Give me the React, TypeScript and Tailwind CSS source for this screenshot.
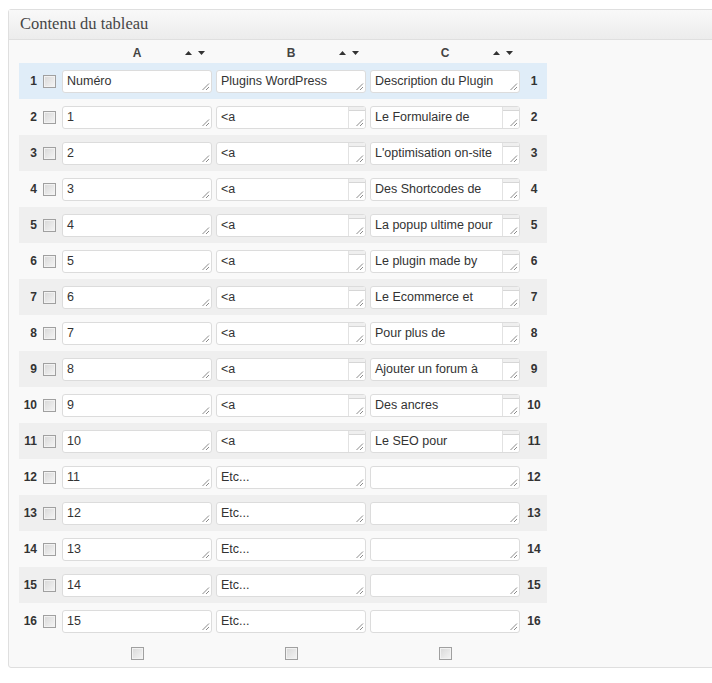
import React from 'react';

type Row = [string, string, string];

const rows: Row[] = [
  ['Numéro', 'Plugins WordPress', 'Description du Plugin'],
  ['1', '<a', 'Le Formulaire de'],
  ['2', '<a', "L'optimisation on-site"],
  ['3', '<a', 'Des Shortcodes de'],
  ['4', '<a', 'La popup ultime pour'],
  ['5', '<a', 'Le plugin made by'],
  ['6', '<a', 'Le Ecommerce et'],
  ['7', '<a', 'Pour plus de'],
  ['8', '<a', 'Ajouter un forum à'],
  ['9', '<a', 'Des ancres'],
  ['10', '<a', 'Le SEO pour'],
  ['11', 'Etc...', ''],
  ['12', 'Etc...', ''],
  ['13', 'Etc...', ''],
  ['14', 'Etc...', ''],
  ['15', 'Etc...', ''],
];

function Grip() {
  return (
    <svg className="absolute bottom-[1px] right-[1px]" width="9" height="9" viewBox="0 0 9 9">
      <line x1="8" y1="1.5" x2="1.5" y2="8" stroke="#8a8a8a" strokeWidth="1" />
      <line x1="8" y1="5" x2="5" y2="8" stroke="#8a8a8a" strokeWidth="1" />
    </svg>
  );
}

function Cell({ text, scroll }: { text: string; scroll?: boolean }) {
  return (
    <div className="relative h-[23px] w-[150px] shrink-0 overflow-hidden rounded-[3px] border border-[#dcdcdc] bg-white">
      <div className={scroll ? 'whitespace-nowrap pl-[4px] pr-[22px] pt-[3px] text-[12.5px] leading-[15px] text-[#333]' : 'whitespace-nowrap px-[4px] pt-[3px] text-[12.5px] leading-[15px] text-[#333]'}>
        {text}
      </div>
      {scroll && (
        <div className="absolute bottom-0 right-0 top-0 w-[17px] border-l border-[#e2e2e2] bg-white">
          <div className="h-[4px] border-b border-[#d6d6d6] bg-[#efefef]" />
        </div>
      )}
      <Grip />
    </div>
  );
}

function Check() {
  return (
    <div className="h-[13px] w-[13px] shrink-0 border border-[#a0a0a0] bg-gradient-to-br from-[#d8d8d8] to-[#f5f5f5] shadow-[inset_0_0_0_1px_#f2f2f2]" />
  );
}

function Arrows() {
  return (
    <div className="flex items-center gap-[6px]">
      <svg width="7" height="4" viewBox="0 0 7 4">
        <polygon points="3.5,0 7,4 0,4" fill="#333" />
      </svg>
      <svg width="7" height="4" viewBox="0 0 7 4">
        <polygon points="0,0 7,0 3.5,4" fill="#333" />
      </svg>
    </div>
  );
}

function ColHead({ label }: { label: string }) {
  return (
    <div className="grid w-[150px] shrink-0 grid-cols-[1fr_auto_1fr] items-center">
      <div />
      <div className="text-[12px] font-bold text-[#444]">{label}</div>
      <div className="flex justify-end pr-[7px]">
        <Arrows />
      </div>
    </div>
  );
}

export default function App() {
  return (
    <div className="h-[683px] w-[712px] overflow-hidden bg-white font-['Liberation_Sans',Arial,sans-serif]">
      <div className="ml-[8px] mt-[9px] w-[720px] rounded-[3px] border border-[#dfdfdf] bg-[#f9f9f9]">
        <div className="flex h-[30px] items-center border-b border-[#dfdfdf] bg-gradient-to-b from-[#f9f9f9] to-[#ececec] pl-[11px] font-['Liberation_Serif',Georgia,serif] text-[16.5px] text-[#464646]">
          Contenu du tableau
        </div>

        <div className="pl-[10px] pt-[3px]">
          <div className="flex h-[20px] items-center pl-[43px]">
            <ColHead label="A" />
            <div className="w-[4px]" />
            <ColHead label="B" />
            <div className="w-[4px]" />
            <ColHead label="C" />
          </div>

          {rows.map((row, i) => {
            const bg = i === 0 ? 'bg-[#e0edf8]' : i % 2 === 0 ? 'bg-[#efefef]' : '';
            const scroll = i >= 1 && i <= 10;
            return (
              <div key={i} className={`flex h-[36px] w-[528px] items-center ${bg}`}>
                <div className="w-[18px] shrink-0 text-right text-[12px] font-bold text-[#333]">{i + 1}</div>
                <div className="ml-[6px]">
                  <Check />
                </div>
                <div className="ml-[6px] flex gap-[4px]">
                  <Cell text={row[0]} />
                  <Cell text={row[1]} scroll={scroll} />
                  <Cell text={row[2]} scroll={scroll} />
                </div>
                <div className="ml-[4px] w-[20px] shrink-0 text-center text-[12px] font-bold text-[#333]">{i + 1}</div>
              </div>
            );
          })}

          <div className="flex h-[28px] items-center pl-[43px]">
            {[0, 1, 2].map((c) => (
              <div key={c} className={c > 0 ? 'ml-[4px] flex w-[150px] justify-center' : 'flex w-[150px] justify-center'}>
                <Check />
              </div>
            ))}
          </div>
        </div>
      </div>
    </div>
  );
}
